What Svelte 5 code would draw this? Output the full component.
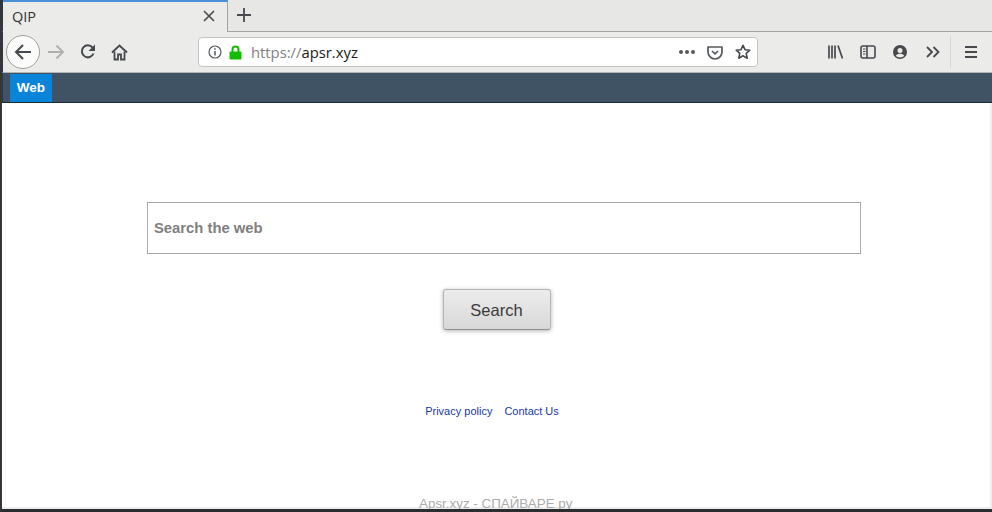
<script>
	const webLabel = 'Web';
</script>

<div class="window">
	<div class="tabs">
		<div class="tab">
			<span class="tab-title">QIP</span>
			<svg class="close" width="12" height="12" viewBox="0 0 12 12"><path d="M1 1l10 10M11 1L1 11" stroke="#47494d" stroke-width="1.6" fill="none" /></svg>
		</div>
		<svg class="plus" width="14" height="14" viewBox="0 0 14 14"><path d="M7 0v14M0 7h14" stroke="#47494d" stroke-width="1.8" fill="none" /></svg>
	</div>

	<div class="toolbar">
		<div class="back">
			<svg width="20" height="20" viewBox="0 0 20 20"><path d="M18 10H3M10 3l-7 7 7 7" stroke="#45484c" stroke-width="2" fill="none" /></svg>
		</div>
		<svg class="forward" width="18" height="16" viewBox="0 0 18 16"><path d="M1 8h15M9.500 1.500L16 8l-6.500 6.500" stroke="#aeaeae" stroke-width="1.800" fill="none" /></svg>
		<svg class="reload" width="16" height="16" viewBox="0 0 16 16"><path d="M13.500 9.500A6 6 0 1 1 12.500 3.500" stroke="#45484c" stroke-width="2" fill="none" /><path d="M15 0.500v6.500H8.500z" fill="#45484c" /></svg>
		<svg class="home" width="17" height="17" viewBox="0 0 17 17"><path d="M1 8.500L8.500 1.500 16 8.500" stroke="#45484c" stroke-width="1.800" fill="none" /><path d="M3.500 7.500V15.500H7V10.500H10V15.500H13.500V7.500" stroke="#45484c" stroke-width="1.800" fill="none" /></svg>

		<div class="urlbar">
			<svg class="info" width="14" height="14" viewBox="0 0 14 14"><circle cx="7" cy="7" r="6" stroke="#55585c" stroke-width="1.200" fill="none" /><path d="M7 6v4.500M7 3.200v1.500" stroke="#55585c" stroke-width="1.500" /></svg>
			<svg class="lock" width="13" height="15" viewBox="0 0 13 15"><path d="M3.500 7V4.500a3 3 0 0 1 6 0V7" stroke="#12bc00" stroke-width="2" fill="none" /><rect x="0.500" y="6.500" width="12" height="8" rx="1" fill="#12bc00" /></svg>
			<span class="url"><span class="scheme">https://</span>apsr.xyz</span>
			<span class="dots"><i></i><i></i><i></i></span>
			<svg class="pocket" width="16" height="15" viewBox="0 0 16 15"><path d="M1 2h14v5a7 7 0 0 1-14 0z" stroke="#55585c" stroke-width="1.700" stroke-linejoin="round" fill="none" /><path d="M5 6l3 2.800L11 6" stroke="#55585c" stroke-width="1.700" fill="none" /></svg>
			<svg class="star" width="16" height="16" viewBox="0 0 16 16"><path d="M8 1.300l2 4.400 4.800.5-3.600 3.200 1 4.800L8 11.800l-4.200 2.400 1-4.800L1.200 6.200 6 5.700z" stroke="#45484c" stroke-width="1.600" stroke-linejoin="round" fill="none" /></svg>
		</div>

		<div class="tools">
			<svg width="16" height="14" viewBox="0 0 16 14"><path d="M1 0.500v13M4 0.500v13M7 0.500v13M10 0.500l4.500 13" stroke="#47494d" stroke-width="1.700" fill="none" /></svg>
			<svg width="16" height="14" viewBox="0 0 16 14"><rect x="1" y="1" width="14" height="12" rx="2" stroke="#47494d" stroke-width="1.600" fill="none" /><path d="M7 1v12" stroke="#47494d" stroke-width="1.600" /><path d="M3 4h2.500M3 6.500h2.500M3 9h2.500" stroke="#47494d" stroke-width="1" /></svg>
			<svg width="16" height="14" viewBox="-1 0 16 14"><circle cx="7" cy="7" r="7" fill="#47494d" /><circle cx="7" cy="5.500" r="2.500" fill="#ebebe9" /><path d="M2.800 10.800c1-1.500 2.500-2 4.200-2s3.200.5 4.200 2c-1 1-2.500 1.600-4.200 1.600s-3.200-.6-4.200-1.600z" fill="#ebebe9" /></svg>
			<svg width="16" height="12" viewBox="-2 0 16 12"><path d="M1 1l5 5-5 5M7.500 1l5 5-5 5" stroke="#47494d" stroke-width="1.800" fill="none" /></svg>
		</div>
		<div class="divider"></div>
		<div class="menu"><i></i><i></i><i></i></div>
	</div>

	<nav class="sitebar">
		<a class="web" href="#web">{webLabel}</a>
	</nav>

	<main class="page">
		<div class="searchbox">Search the web</div>
		<button class="go">Search</button>
		<div class="links">
			<a href="#privacy">Privacy policy</a>
			<a href="#contact">Contact Us</a>
		</div>
	</main>
	<div class="statusline"></div>
	<div class="watermark">Apsr.xyz - СПАЙВАРЕ ру</div>
</div>

<style>
	:global(body) {
		margin: 0;
		background: #fff;
	}
	.window {
		position: relative;
		box-sizing: border-box;
		width: 992px;
		height: 512px;
		display: flex;
		flex-direction: column;
		overflow: hidden;
		border-left: 2px solid #33373b;
		border-bottom: 3px solid #2b2e31;
		font-family: 'Liberation Sans', sans-serif;
		background: #fff;
	}
	.tabs {
		height: 32px;
		flex: none;
		display: flex;
		align-items: center;
		background: #e7e7e5;
		border-left: 1px solid #33373b;
		border-bottom: 1px solid #a3a3a3;
		box-sizing: border-box;
	}
	.tab {
		box-sizing: border-box;
		width: 225px;
		height: 32px;
		display: flex;
		align-items: center;
		justify-content: space-between;
		padding: 0 12px 2px 9px;
		background: #ebebe9;
		border-top: 2px solid #4a90d9;
		border-right: 1px solid #a3a3a3;
		margin-bottom: -1px;
	}
	.tab-title {
		font-family: 'Open Sans', 'DejaVu Sans', sans-serif;
		font-size: 14.500px;
		color: #333;
	}
	.plus {
		margin-left: 9px;
		margin-top: -2px;
	}
	.toolbar {
		height: 41px;
		flex: none;
		box-sizing: border-box;
		display: flex;
		align-items: center;
		background: #ebebe9;
		border-left: 1px solid #33373b;
		border-bottom: 1px solid #b4b4b2;
		padding-left: 3px;
	}
	.back {
		box-sizing: border-box;
		width: 34px;
		height: 34px;
		border-radius: 50%;
		border: 1px solid #a0a0a0;
		background: #fbfbfb;
		display: flex;
		align-items: center;
		justify-content: center;
	}
	.forward {
		margin-left: 7px;
	}
	.reload {
		margin-left: 15px;
	}
	.home {
		margin-left: 15px;
	}
	.urlbar {
		box-sizing: border-box;
		margin-left: 70px;
		width: 560px;
		height: 30px;
		display: flex;
		align-items: center;
		background: #fff;
		border: 1px solid #c4c4c4;
		border-radius: 4px;
		padding-left: 9px;
	}
	.lock {
		margin-left: 7px;
	}
	.url {
		margin-left: 9px;
		font-family: 'Open Sans', 'DejaVu Sans', sans-serif;
		font-size: 14.800px;
		color: #1a1a1a;
		flex: 1;
	}
	.scheme {
		color: #808080;
	}
	.dots {
		display: flex;
		gap: 2px;
	}
	.dots i {
		width: 4px;
		height: 4px;
		border-radius: 50%;
		background: #55585c;
	}
	.pocket {
		margin-left: 12px;
	}
	.star {
		margin-left: 12px;
		margin-right: 6px;
	}
	.tools {
		display: flex;
		align-items: center;
		gap: 16px;
		margin-left: 70px;
	}
	.divider {
		width: 1px;
		height: 32px;
		background: #d6d6d4;
		margin-left: 10px;
	}
	.menu {
		display: flex;
		flex-direction: column;
		gap: 3px;
		margin-left: 14px;
	}
	.menu i {
		width: 12px;
		height: 2px;
		background: #47494d;
	}
	.sitebar {
		height: 30px;
		flex: none;
		box-sizing: border-box;
		background: #3f5364;
		border-left: 1px solid #33373b;
		border-bottom: 1px solid #1e2a33;
		padding: 1px 0 0 7px;
	}
	.web {
		display: block;
		width: 42px;
		height: 28px;
		line-height: 28px;
		text-align: center;
		background: #0a84d8;
		color: #fff;
		font-weight: 700;
		font-size: 13.500px;
		text-decoration: none;
	}
	.page {
		flex: 1;
		display: flex;
		flex-direction: column;
		align-items: center;
		padding: 99px 0 0 1px;
		background: #fff;
		border-right: 2px solid #f0f0f0;
	}
	.searchbox {
		box-sizing: border-box;
		width: 714px;
		height: 52px;
		margin-left: 15px;
		border: 1px solid #a9a9a9;
		padding-left: 6px;
		line-height: 50px;
		font-weight: 700;
		font-size: 14.800px;
		color: #808080;
	}
	.go {
		width: 108px;
		height: 41px;
		margin-top: 35px;
		border: 1px solid #b5b5b5;
		border-bottom-color: #8e8e8e;
		border-radius: 3px;
		background: linear-gradient(#ececec, #d8d8d8);
		box-shadow: 0 1px 4px rgba(0, 0, 0, 0.3);
		font-family: 'Liberation Sans', sans-serif;
		font-size: 16.500px;
		color: #3a3a3a;
		padding: 1px 0 0;
	}
	.links {
		margin-top: 75px;
		margin-right: 9px;
		display: flex;
		gap: 12px;
		font-size: 11px;
	}
	.links a {
		color: #1a3a9c;
		text-decoration: none;
	}
	.statusline {
		height: 2px;
		flex: none;
		background: #ededed;
	}
	.watermark {
		position: absolute;
		left: 417px;
		bottom: -2px;
		font-size: 13.400px;
		line-height: 15px;
		color: #ababab;
	}
</style>
